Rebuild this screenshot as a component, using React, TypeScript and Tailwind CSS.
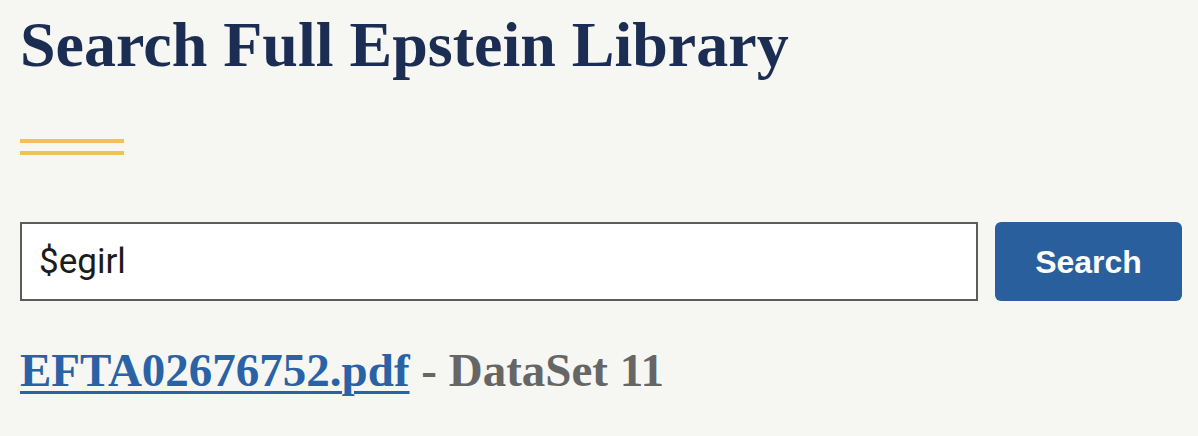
import React from 'react';

export default function App(): React.ReactElement {
  return (
    <div className="min-h-[436px] w-[1198px] bg-[#f6f6f3] pl-[20px] pr-[16px] pt-[13px]">
      <h1 className="font-['Liberation_Serif',serif] text-[64px] leading-[64px] font-bold text-[#1b2d52]">
        Search Full Epstein Library
      </h1>

      {/* Accent rule */}
      <div className="mt-[62px] flex w-[104px] flex-col gap-[8px]">
        <div className="h-[4px] bg-[#f0c05a]" />
        <div className="h-[4px] bg-[#f0c05a]" />
      </div>

      <form className="mt-[67px] flex items-stretch gap-[17px]" onSubmit={(e) => e.preventDefault()}>
        <input
          type="text"
          defaultValue="$egirl"
          aria-label="Search"
          className="h-[79px] w-[958px] shrink-0 border-2 border-[#5c5c5c] bg-white px-[17px] font-['Roboto',sans-serif] text-[35px] text-[#1b1b1b] outline-none"
        />
        <button
          type="submit"
          className="h-[79px] w-[187px] shrink-0 rounded-[6px] bg-[#2a5f9e] font-['Liberation_Sans',sans-serif] text-[32px] font-bold text-white"
        >
          Search
        </button>
      </form>

      <div className="mt-[46px] font-['Liberation_Serif',serif] text-[47px] leading-[47px] font-bold">
        <a href="#" className="text-[#2a62a6] underline decoration-[3px] underline-offset-[5px]">
          EFTA02676752.pdf
        </a>
        <span className="text-[#666666]"> - DataSet 11</span>
      </div>
    </div>
  );
}
